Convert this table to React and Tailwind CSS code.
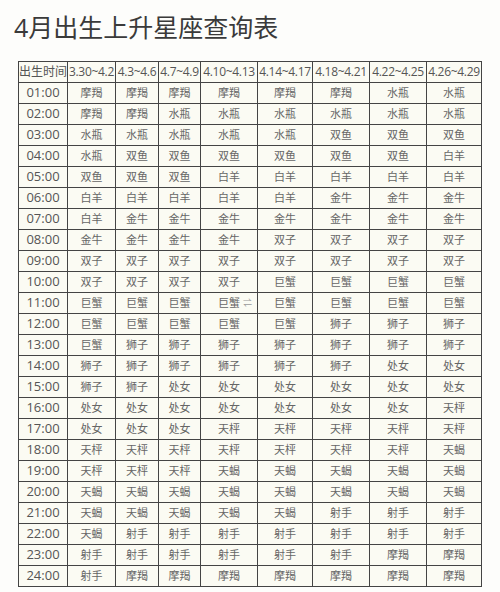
import React from 'react';

const headers = ['3.30~4.2', '4.3~4.6', '4.7~4.9', '4.10~4.13', '4.14~4.17', '4.18~4.21', '4.22~4.25', '4.26~4.29'];

const rows = [
  ['01:00', '摩羯 摩羯 摩羯 摩羯 摩羯 摩羯 水瓶 水瓶'],
  ['02:00', '摩羯 摩羯 水瓶 水瓶 水瓶 水瓶 水瓶 水瓶'],
  ['03:00', '水瓶 水瓶 水瓶 水瓶 水瓶 双鱼 双鱼 双鱼'],
  ['04:00', '水瓶 双鱼 双鱼 双鱼 双鱼 双鱼 双鱼 白羊'],
  ['05:00', '双鱼 双鱼 双鱼 白羊 白羊 白羊 白羊 白羊'],
  ['06:00', '白羊 白羊 白羊 白羊 白羊 金牛 金牛 金牛'],
  ['07:00', '白羊 金牛 金牛 金牛 金牛 金牛 金牛 金牛'],
  ['08:00', '金牛 金牛 金牛 金牛 双子 双子 双子 双子'],
  ['09:00', '双子 双子 双子 双子 双子 双子 双子 双子'],
  ['10:00', '双子 双子 双子 双子 巨蟹 巨蟹 巨蟹 巨蟹'],
  ['11:00', '巨蟹 巨蟹 巨蟹 巨蟹 巨蟹 巨蟹 巨蟹 巨蟹'],
  ['12:00', '巨蟹 巨蟹 巨蟹 巨蟹 巨蟹 狮子 狮子 狮子'],
  ['13:00', '巨蟹 狮子 狮子 狮子 狮子 狮子 狮子 狮子'],
  ['14:00', '狮子 狮子 狮子 狮子 狮子 狮子 处女 处女'],
  ['15:00', '狮子 狮子 处女 处女 处女 处女 处女 处女'],
  ['16:00', '处女 处女 处女 处女 处女 处女 处女 天枰'],
  ['17:00', '处女 处女 处女 天枰 天枰 天枰 天枰 天枰'],
  ['18:00', '天枰 天枰 天枰 天枰 天枰 天枰 天枰 天蝎'],
  ['19:00', '天枰 天枰 天枰 天蝎 天蝎 天蝎 天蝎 天蝎'],
  ['20:00', '天蝎 天蝎 天蝎 天蝎 天蝎 天蝎 天蝎 天蝎'],
  ['21:00', '天蝎 天蝎 天蝎 天蝎 天蝎 射手 射手 射手'],
  ['22:00', '天蝎 射手 射手 射手 射手 射手 射手 射手'],
  ['23:00', '射手 射手 射手 射手 射手 射手 摩羯 摩羯'],
  ['24:00', '射手 摩羯 摩羯 摩羯 摩羯 摩羯 摩羯 摩羯'],
];

const font = { fontFamily: '"Open Sans", "Noto Sans CJK SC", sans-serif' };

export default function App() {
  return (
    <div className="w-[500px] h-[592px] bg-[#fdfdfb] overflow-hidden" style={font}>
      <h1 className="pl-[14px] pt-[15px] text-[25px] leading-[25px] font-normal text-[#3a3a3a]">
        4月出生上升星座查询表
      </h1>

      <div className="ml-[18px] mt-[21px] w-[464px] grid grid-cols-[48px_47px_42px_41px_56px_54px_56px_56px_54px] auto-rows-[20px] gap-px p-px bg-[#444]">
        <div className="bg-[#fbfbf3] flex items-center justify-center text-[12px] text-[#555] whitespace-nowrap">
          出生时间
        </div>
        {headers.map((h) => (
          <div key={h} className="bg-[#fbfbf3] flex items-center justify-center text-[12px] text-[#555] whitespace-nowrap tracking-[-0.3px]">
            {h}
          </div>
        ))}

        {rows.map(([time, signs]) => (
          <React.Fragment key={time}>
            <div className="bg-[#fbfbf3] flex items-center justify-center text-[13px] text-[#555]">
              {time}
            </div>
            {signs.split(' ').map((s, i) => (
              <div key={i} className="relative bg-[#fbfbf3] flex items-center justify-center text-[11px] text-[#666]">
                {s}
                {time === '11:00' && i === 3 && (
                  <span className="absolute right-[5px] top-[3px] text-[9px] text-[#999]">⇌</span>
                )}
              </div>
            ))}
          </React.Fragment>
        ))}
      </div>
    </div>
  );
}
